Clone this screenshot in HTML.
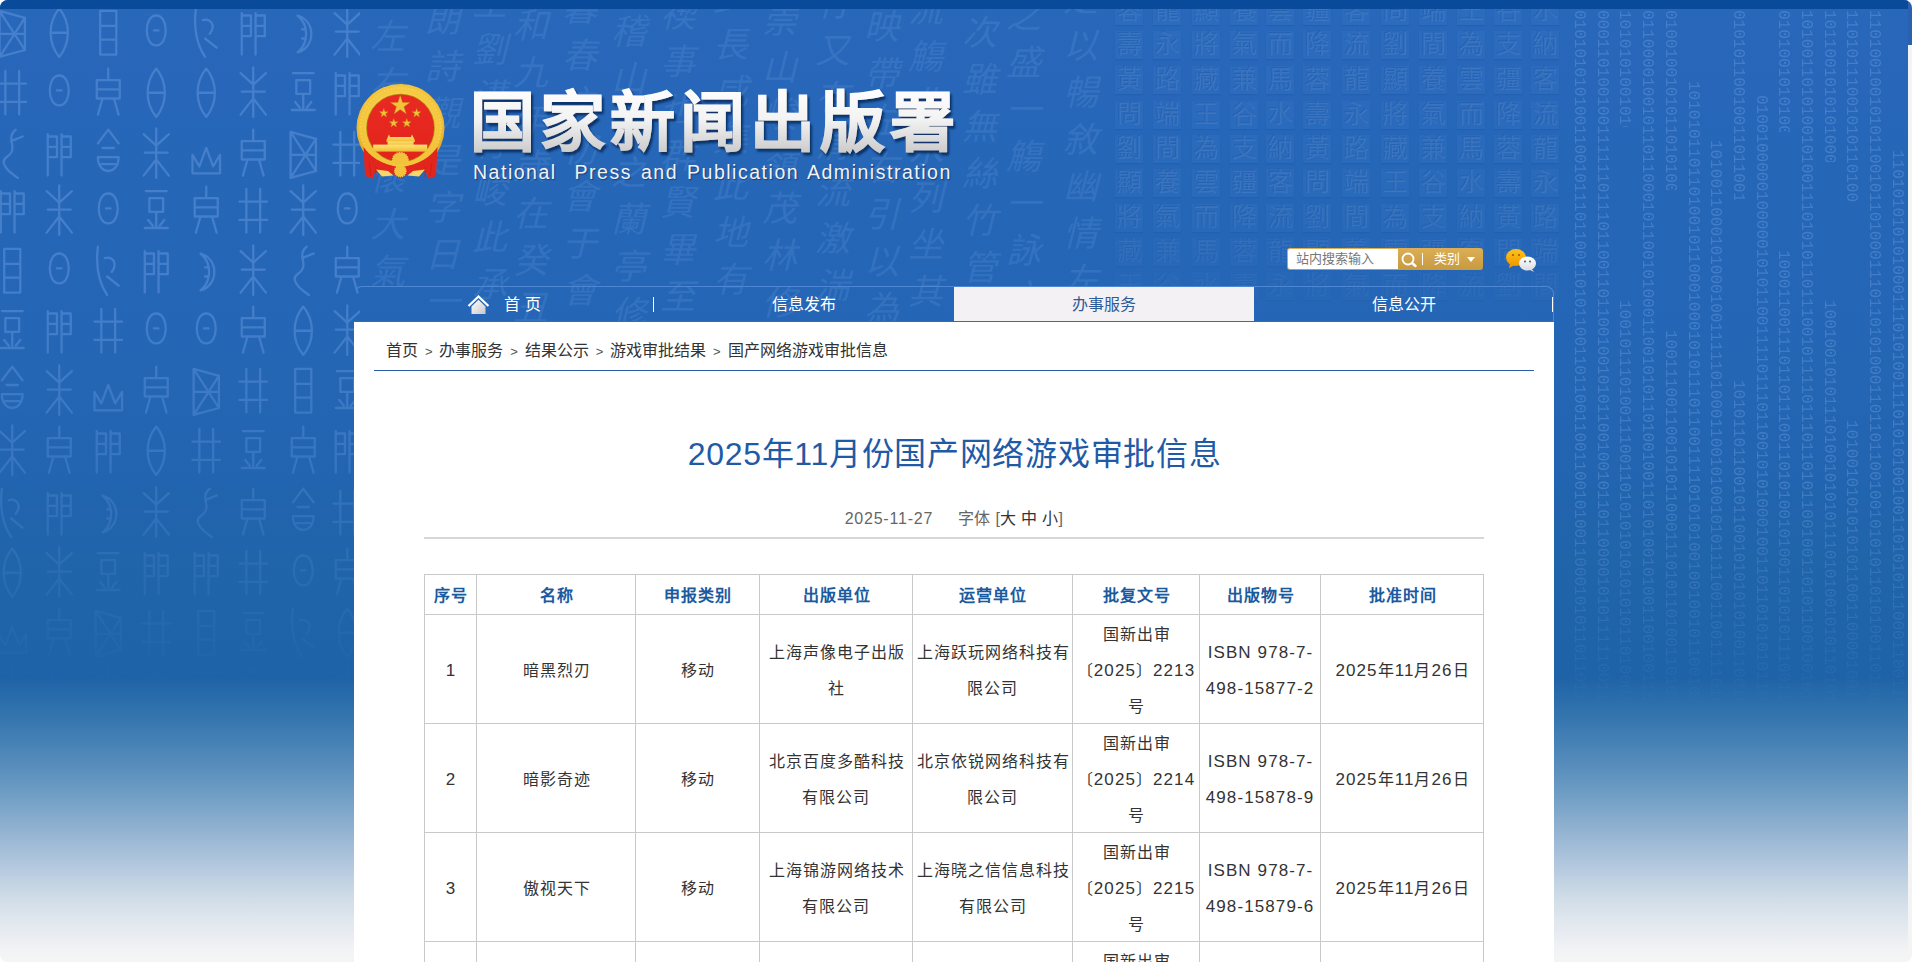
<!DOCTYPE html>
<html lang="zh-CN">
<head>
<meta charset="utf-8">
<title>国家新闻出版署</title>
<style>
html,body{margin:0;padding:0;}
body{width:1912px;height:962px;overflow:hidden;background:#fdfdfd;font-family:"Liberation Sans",sans-serif;position:relative;}
#frame{position:absolute;left:0;top:0;width:1912px;height:962px;border-radius:8px;overflow:hidden;}
#win{position:absolute;left:0;top:0;width:1908px;height:962px;overflow:hidden;
 background:linear-gradient(to bottom,#2867ba 0px,#2465b4 400px,#1f64a8 600px,#1e63a7 677px,#3878b0 723px,#5088b9 756px,#6b9bc3 790px,#8eb0cf 826px,#b4c9df 867px,#cfdce6 897px,#e2e8ef 924px,#f2f3f5 951px,#f5f5f5 962px);}
#sb{position:absolute;left:1908px;top:45px;width:4px;height:917px;background:#f4f4f4;}
#sbtop{position:absolute;left:1908px;top:0;width:4px;height:45px;background:#2a60ac;}
#topbar{position:absolute;left:0;top:0;width:100%;height:9px;background:#0a4a9b;}
/* header */
#emblem{position:absolute;left:355px;top:83px;width:92px;height:98px;}
#logo-cn{position:absolute;left:466px;top:80px;font-family:"Liberation Sans",sans-serif;}
#logo-en{position:absolute;left:473px;top:160px;font-size:19.5px;line-height:24px;color:#f2f2f2;letter-spacing:1.52px;white-space:nowrap;word-spacing:2px;
 text-shadow:1px 1px 1px rgba(10,40,90,0.6);}
/* search */
#search{position:absolute;left:1287px;top:248px;width:196px;height:22px;border-radius:3px;background:linear-gradient(#dcae55,#c89a40);box-sizing:border-box;}
#search .inp{position:absolute;left:1px;top:1px;width:110px;height:20px;background:#fff;border-radius:2px 0 0 2px;font-size:13px;line-height:20px;color:#777;text-indent:8px;}
#search .lb{position:absolute;left:147px;top:0;font-size:13px;line-height:22px;color:#fff;}
#search .sep{position:absolute;left:135px;top:5px;width:1px;height:12px;background:#fff;}
#search .tri{position:absolute;left:180px;top:9px;width:0;height:0;border-left:4px solid transparent;border-right:4px solid transparent;border-top:5px solid #fff;}
#wechat{position:absolute;left:1505px;top:248px;width:32px;height:25px;}
/* nav */
#nav{position:absolute;left:354px;top:286px;width:1200px;height:35px;box-sizing:border-box;border-top:1px solid #4d86d2;border-radius:8px 8px 0 0;border-left:1px solid transparent;border-right:1px solid #4d86d2;}
#nav .it{position:absolute;top:0;height:34px;line-height:36px;font-size:16px;color:#fff;text-align:center;}
#nav .sepv{position:absolute;top:10px;width:1px;height:15px;background:#fff;}
#nav .act{background:#f3f1f3;color:#2b5b9b;}
/* content */
#content{position:absolute;left:354px;top:321px;width:1200px;height:700px;background:#fff;border-top:1px solid #2a6ec4;box-sizing:border-box;}
#content>*{margin-top:-1px;}
#crumb{position:absolute;left:32px;top:18px;font-size:16px;line-height:24px;color:#333;white-space:nowrap;}
#crumb .gt{font-size:13px;color:#555;margin:0 6.9px;}
#crumbline{position:absolute;left:20px;top:49px;width:1160px;height:1px;background:#2a5ea6;}
#title{position:absolute;left:0;top:108px;width:1200px;text-align:center;font-size:32px;line-height:50px;letter-spacing:0.7px;text-indent:1px;color:#1f5aa6;white-space:nowrap;}
#meta{position:absolute;left:0;top:186px;width:1200px;text-align:center;font-size:16px;line-height:24px;color:#666;white-space:nowrap;}
#metaline{position:absolute;left:70px;top:216px;width:1060px;height:2px;background:#d7d7d7;}
table{position:absolute;left:70px;top:253px;border-collapse:collapse;font-size:16px;color:#333;}
td,th{border:1px solid #c9c9c9;text-align:center;padding:0;}
th{color:#1a5a9e;font-weight:bold;height:39px;letter-spacing:1px;text-indent:1px;line-height:39px;}
td{line-height:36px;height:108px;letter-spacing:1px;text-indent:1px;}
th div{position:relative;top:1px;}
td div{position:relative;top:2px;}
td .n{font-size:17px;letter-spacing:1.1px;}
</style>
</head>
<body>
<div id="frame">
<div id="win">
<!--TEX-->
<style>
#texM,#texS,#texB{position:absolute;left:0;top:0;width:1908px;height:962px;pointer-events:none;}
#texL{position:absolute;left:0;top:0;}
#texL{opacity:0.6;}
#texL{-webkit-mask-image:linear-gradient(to bottom,#000 0,#000 300px,rgba(0,0,0,0.6) 480px,rgba(0,0,0,0.25) 600px,transparent 690px);}
#texM span{position:absolute;font-family:"Liberation Serif",serif;font-size:35px;line-height:40px;color:rgba(130,180,240,0.18);font-style:italic;}
#texS span{position:absolute;width:28px;height:28px;font-family:"Liberation Serif",serif;font-size:25px;line-height:28px;text-align:center;color:rgba(160,200,250,0.13);text-shadow:-1px -1px 0 rgba(0,25,80,0.10);background:rgba(90,150,230,0.09);box-shadow:0 1px 1px rgba(0,25,80,0.08);}
#texS{-webkit-mask-image:linear-gradient(to bottom,#000 0,#000 200px,rgba(0,0,0,0.4) 290px);}
#texB div{position:absolute;height:16px;font-family:"Liberation Mono",monospace;font-size:16px;line-height:16px;letter-spacing:0px;color:rgba(150,195,250,0.26);transform-origin:0 0;transform:rotate(90deg) translate(0,-16px);white-space:nowrap;overflow:hidden;}
#texB{-webkit-mask-image:linear-gradient(to bottom,#000 0,#000 480px,rgba(0,0,0,0.5) 620px,transparent 720px);}
</style>
<svg id="texL" width="360" height="720" viewBox="0 0 360 720"><defs><path id="g0" d="M4,6 L26,12 L26,40 L4,46 Z M4,6 L26,40 M26,12 L4,46 M4,26 L26,26"/><path id="g1" d="M5,8 L5,44 M5,10 L13,10 L13,28 L5,28 M5,19 L13,19 M17,8 L17,44 M17,10 L25,10 L25,28 L17,28 M17,19 L25,19"/><path id="g2" d="M15,4 L6,16 M15,4 L24,16 M10,20 L20,20 M6,28 C6,44 24,44 24,28 Z M9,34 L21,34"/><path id="g3" d="M15,4 C5,16 5,34 15,46 C25,34 25,16 15,4 Z M8,25 L22,25"/><path id="g4" d="M10,10 C26,14 26,38 10,42 C20,34 20,18 10,10 Z M14,22 L16,22 M14,30 L16,30"/><path id="g5" d="M9,6 L9,44 M21,6 L21,44 M3,17 L27,17 M3,33 L27,33"/><path id="g6" d="M8,6 L22,6 L22,44 L8,44 Z M8,19 L22,19 M8,31 L22,31"/><path id="g7" d="M15,3 L15,46 M15,18 L4,8 M15,18 L26,8 M15,30 L4,44 M15,30 L26,44 M5,24 L25,24"/><path id="g8" d="M3,42 L3,26 L9,36 L15,20 L21,36 L27,26 L27,42 Z"/><path id="g9" d="M15,10 C4,10 4,36 15,36 C26,36 26,10 15,10 Z M13,23 L17,23"/><path id="g10" d="M18,4 C8,12 22,20 10,28 C4,32 10,40 20,46 M14,14 L24,10"/><path id="g11" d="M6,8 L24,8 M9,14 L21,14 L21,26 L9,26 Z M15,26 L15,40 M5,40 L25,40 M8,33 L12,38 M22,33 L18,38"/><path id="g12" d="M6,4 C4,20 6,34 14,46 M12,14 C18,12 24,18 18,26 M14,30 L24,38"/><path id="g13" d="M15,4 L15,14 M5,14 L25,14 L25,30 L5,30 Z M5,22 L25,22 M10,30 L6,44 M20,30 L24,44"/></defs><g fill="none" stroke="#5a90d8" stroke-width="2" stroke-linejoin="round" stroke-linecap="round"><use href="#g0" transform="translate(-5,4) scale(1.15,1.15)"/><use href="#g3" transform="translate(42,4) scale(1.15,1.15)"/><use href="#g6" transform="translate(91,4) scale(1.15,1.15)"/><use href="#g9" transform="translate(139,4) scale(1.15,1.15)"/><use href="#g12" transform="translate(189,4) scale(1.15,1.15)"/><use href="#g1" transform="translate(236,4) scale(1.15,1.15)"/><use href="#g4" transform="translate(286,4) scale(1.15,1.15)"/><use href="#g7" transform="translate(330,4) scale(1.15,1.15)"/><use href="#g5" transform="translate(-5,64) scale(1.15,1.15)"/><use href="#g9" transform="translate(42,64) scale(1.15,1.15)"/><use href="#g13" transform="translate(91,64) scale(1.15,1.15)"/><use href="#g3" transform="translate(139,64) scale(1.15,1.15)"/><use href="#g3" transform="translate(189,64) scale(1.15,1.15)"/><use href="#g7" transform="translate(236,64) scale(1.15,1.15)"/><use href="#g11" transform="translate(286,64) scale(1.15,1.15)"/><use href="#g1" transform="translate(330,64) scale(1.15,1.15)"/><use href="#g10" transform="translate(-5,125) scale(1.15,1.15)"/><use href="#g1" transform="translate(42,125) scale(1.15,1.15)"/><use href="#g2" transform="translate(91,125) scale(1.15,1.15)"/><use href="#g7" transform="translate(139,125) scale(1.15,1.15)"/><use href="#g8" transform="translate(189,125) scale(1.15,1.15)"/><use href="#g13" transform="translate(236,125) scale(1.15,1.15)"/><use href="#g0" transform="translate(286,125) scale(1.15,1.15)"/><use href="#g5" transform="translate(330,125) scale(1.15,1.15)"/><use href="#g1" transform="translate(-5,182) scale(1.15,1.15)"/><use href="#g7" transform="translate(42,182) scale(1.15,1.15)"/><use href="#g9" transform="translate(91,182) scale(1.15,1.15)"/><use href="#g11" transform="translate(139,182) scale(1.15,1.15)"/><use href="#g13" transform="translate(189,182) scale(1.15,1.15)"/><use href="#g5" transform="translate(236,182) scale(1.15,1.15)"/><use href="#g7" transform="translate(286,182) scale(1.15,1.15)"/><use href="#g9" transform="translate(330,182) scale(1.15,1.15)"/><use href="#g6" transform="translate(-5,242) scale(1.15,1.15)"/><use href="#g9" transform="translate(42,242) scale(1.15,1.15)"/><use href="#g12" transform="translate(91,242) scale(1.15,1.15)"/><use href="#g1" transform="translate(139,242) scale(1.15,1.15)"/><use href="#g4" transform="translate(189,242) scale(1.15,1.15)"/><use href="#g7" transform="translate(236,242) scale(1.15,1.15)"/><use href="#g10" transform="translate(286,242) scale(1.15,1.15)"/><use href="#g13" transform="translate(330,242) scale(1.15,1.15)"/><use href="#g11" transform="translate(-5,302) scale(1.15,1.15)"/><use href="#g1" transform="translate(42,302) scale(1.15,1.15)"/><use href="#g5" transform="translate(91,302) scale(1.15,1.15)"/><use href="#g9" transform="translate(139,302) scale(1.15,1.15)"/><use href="#g9" transform="translate(189,302) scale(1.15,1.15)"/><use href="#g13" transform="translate(236,302) scale(1.15,1.15)"/><use href="#g3" transform="translate(286,302) scale(1.15,1.15)"/><use href="#g7" transform="translate(330,302) scale(1.15,1.15)"/><use href="#g2" transform="translate(-5,362) scale(1.15,1.15)"/><use href="#g7" transform="translate(42,362) scale(1.15,1.15)"/><use href="#g8" transform="translate(91,362) scale(1.15,1.15)"/><use href="#g13" transform="translate(139,362) scale(1.15,1.15)"/><use href="#g0" transform="translate(189,362) scale(1.15,1.15)"/><use href="#g5" transform="translate(236,362) scale(1.15,1.15)"/><use href="#g6" transform="translate(286,362) scale(1.15,1.15)"/><use href="#g11" transform="translate(330,362) scale(1.15,1.15)"/><use href="#g7" transform="translate(-5,422) scale(1.15,1.15)"/><use href="#g13" transform="translate(42,422) scale(1.15,1.15)"/><use href="#g1" transform="translate(91,422) scale(1.15,1.15)"/><use href="#g3" transform="translate(139,422) scale(1.15,1.15)"/><use href="#g5" transform="translate(189,422) scale(1.15,1.15)"/><use href="#g11" transform="translate(236,422) scale(1.15,1.15)"/><use href="#g13" transform="translate(286,422) scale(1.15,1.15)"/><use href="#g1" transform="translate(330,422) scale(1.15,1.15)"/><use href="#g12" transform="translate(-5,484) scale(1.15,1.15)"/><use href="#g1" transform="translate(42,484) scale(1.15,1.15)"/><use href="#g4" transform="translate(91,484) scale(1.15,1.15)"/><use href="#g7" transform="translate(139,484) scale(1.15,1.15)"/><use href="#g10" transform="translate(189,484) scale(1.15,1.15)"/><use href="#g13" transform="translate(236,484) scale(1.15,1.15)"/><use href="#g2" transform="translate(286,484) scale(1.15,1.15)"/><use href="#g5" transform="translate(330,484) scale(1.15,1.15)"/><use href="#g3" transform="translate(-5,544) scale(1.15,1.15)"/><use href="#g7" transform="translate(42,544) scale(1.15,1.15)"/><use href="#g11" transform="translate(91,544) scale(1.15,1.15)"/><use href="#g1" transform="translate(139,544) scale(1.15,1.15)"/><use href="#g1" transform="translate(189,544) scale(1.15,1.15)"/><use href="#g5" transform="translate(236,544) scale(1.15,1.15)"/><use href="#g9" transform="translate(286,544) scale(1.15,1.15)"/><use href="#g13" transform="translate(330,544) scale(1.15,1.15)"/><use href="#g8" transform="translate(-5,604) scale(1.15,1.15)"/><use href="#g13" transform="translate(42,604) scale(1.15,1.15)"/><use href="#g0" transform="translate(91,604) scale(1.15,1.15)"/><use href="#g5" transform="translate(139,604) scale(1.15,1.15)"/><use href="#g6" transform="translate(189,604) scale(1.15,1.15)"/><use href="#g11" transform="translate(236,604) scale(1.15,1.15)"/><use href="#g12" transform="translate(286,604) scale(1.15,1.15)"/><use href="#g3" transform="translate(330,604) scale(1.15,1.15)"/><use href="#g13" transform="translate(-5,664) scale(1.15,1.15)"/><use href="#g5" transform="translate(42,664) scale(1.15,1.15)"/><use href="#g7" transform="translate(91,664) scale(1.15,1.15)"/><use href="#g9" transform="translate(139,664) scale(1.15,1.15)"/><use href="#g11" transform="translate(189,664) scale(1.15,1.15)"/><use href="#g3" transform="translate(236,664) scale(1.15,1.15)"/><use href="#g5" transform="translate(286,664) scale(1.15,1.15)"/><use href="#g7" transform="translate(330,664) scale(1.15,1.15)"/></g></svg>
<div id="texM"><span style="left:370px;top:18px">左</span><span style="left:370px;top:65px">右</span><span style="left:370px;top:112px">雜</span><span style="left:370px;top:159px">懷</span><span style="left:370px;top:206px">大</span><span style="left:370px;top:253px">氣</span><span style="left:425px;top:1px">朗</span><span style="left:425px;top:48px">詩</span><span style="left:425px;top:95px">觀</span><span style="left:425px;top:142px">是</span><span style="left:425px;top:189px">字</span><span style="left:425px;top:236px">日</span><span style="left:425px;top:283px">一</span><span style="left:472px;top:-16px">生</span><span style="left:472px;top:31px">劉</span><span style="left:472px;top:78px">溝</span><span style="left:472px;top:125px">有</span><span style="left:472px;top:172px">峻</span><span style="left:472px;top:219px">此</span><span style="left:472px;top:266px">承</span><span style="left:513px;top:7px">和</span><span style="left:513px;top:54px">九</span><span style="left:513px;top:101px">年</span><span style="left:513px;top:148px">歲</span><span style="left:513px;top:195px">在</span><span style="left:513px;top:242px">癸</span><span style="left:513px;top:289px">丑</span><span style="left:562px;top:-10px">暮</span><span style="left:562px;top:37px">春</span><span style="left:562px;top:84px">之</span><span style="left:562px;top:131px">初</span><span style="left:562px;top:178px">會</span><span style="left:562px;top:225px">于</span><span style="left:562px;top:272px">會</span><span style="left:611px;top:13px">稽</span><span style="left:611px;top:60px">山</span><span style="left:611px;top:107px">陰</span><span style="left:611px;top:154px">之</span><span style="left:611px;top:201px">蘭</span><span style="left:611px;top:248px">亭</span><span style="left:611px;top:295px">修</span><span style="left:660px;top:-4px">禊</span><span style="left:660px;top:43px">事</span><span style="left:660px;top:90px">也</span><span style="left:660px;top:137px">群</span><span style="left:660px;top:184px">賢</span><span style="left:660px;top:231px">畢</span><span style="left:660px;top:278px">至</span><span style="left:713px;top:-21px">少</span><span style="left:713px;top:26px">長</span><span style="left:713px;top:73px">咸</span><span style="left:713px;top:120px">集</span><span style="left:713px;top:167px">此</span><span style="left:713px;top:214px">地</span><span style="left:713px;top:261px">有</span><span style="left:762px;top:2px">崇</span><span style="left:762px;top:49px">山</span><span style="left:762px;top:96px">峻</span><span style="left:762px;top:143px">嶺</span><span style="left:762px;top:190px">茂</span><span style="left:762px;top:237px">林</span><span style="left:762px;top:284px">修</span><span style="left:815px;top:-15px">竹</span><span style="left:815px;top:32px">又</span><span style="left:815px;top:79px">有</span><span style="left:815px;top:126px">清</span><span style="left:815px;top:173px">流</span><span style="left:815px;top:220px">激</span><span style="left:815px;top:267px">湍</span><span style="left:864px;top:8px">映</span><span style="left:864px;top:55px">帶</span><span style="left:864px;top:102px">左</span><span style="left:864px;top:149px">右</span><span style="left:864px;top:196px">引</span><span style="left:864px;top:243px">以</span><span style="left:864px;top:290px">為</span><span style="left:908px;top:-9px">流</span><span style="left:908px;top:38px">觴</span><span style="left:908px;top:85px">曲</span><span style="left:908px;top:132px">水</span><span style="left:908px;top:179px">列</span><span style="left:908px;top:226px">坐</span><span style="left:908px;top:273px">其</span><span style="left:962px;top:14px">次</span><span style="left:962px;top:61px">雖</span><span style="left:962px;top:108px">無</span><span style="left:962px;top:155px">絲</span><span style="left:962px;top:202px">竹</span><span style="left:962px;top:249px">管</span><span style="left:962px;top:296px">弦</span><span style="left:1006px;top:-3px">之</span><span style="left:1006px;top:44px">盛</span><span style="left:1006px;top:91px">一</span><span style="left:1006px;top:138px">觴</span><span style="left:1006px;top:185px">一</span><span style="left:1006px;top:232px">詠</span><span style="left:1006px;top:279px">亦</span><span style="left:1063px;top:-20px">足</span><span style="left:1063px;top:27px">以</span><span style="left:1063px;top:74px">暢</span><span style="left:1063px;top:121px">敘</span><span style="left:1063px;top:168px">幽</span><span style="left:1063px;top:215px">情</span><span style="left:1063px;top:262px">左</span></div>
<div id="texS"><span style="left:1115px;top:-3px">蓉</span><span style="left:1153px;top:-3px">龍</span><span style="left:1192px;top:-3px">顯</span><span style="left:1230px;top:-3px">養</span><span style="left:1266px;top:-3px">雲</span><span style="left:1303px;top:-3px">疆</span><span style="left:1342px;top:-3px">客</span><span style="left:1381px;top:-3px">問</span><span style="left:1419px;top:-3px">端</span><span style="left:1457px;top:-3px">王</span><span style="left:1494px;top:-3px">谷</span><span style="left:1531px;top:-3px">水</span><span style="left:1115px;top:31px">壽</span><span style="left:1153px;top:31px">永</span><span style="left:1192px;top:31px">將</span><span style="left:1230px;top:31px">氣</span><span style="left:1266px;top:31px">而</span><span style="left:1303px;top:31px">降</span><span style="left:1342px;top:31px">流</span><span style="left:1381px;top:31px">劉</span><span style="left:1419px;top:31px">間</span><span style="left:1457px;top:31px">為</span><span style="left:1494px;top:31px">支</span><span style="left:1531px;top:31px">納</span><span style="left:1115px;top:66px">黃</span><span style="left:1153px;top:66px">路</span><span style="left:1192px;top:66px">藏</span><span style="left:1230px;top:66px">兼</span><span style="left:1266px;top:66px">馬</span><span style="left:1303px;top:66px">蓉</span><span style="left:1342px;top:66px">龍</span><span style="left:1381px;top:66px">顯</span><span style="left:1419px;top:66px">養</span><span style="left:1457px;top:66px">雲</span><span style="left:1494px;top:66px">疆</span><span style="left:1531px;top:66px">客</span><span style="left:1115px;top:101px">問</span><span style="left:1153px;top:101px">端</span><span style="left:1192px;top:101px">王</span><span style="left:1230px;top:101px">谷</span><span style="left:1266px;top:101px">水</span><span style="left:1303px;top:101px">壽</span><span style="left:1342px;top:101px">永</span><span style="left:1381px;top:101px">將</span><span style="left:1419px;top:101px">氣</span><span style="left:1457px;top:101px">而</span><span style="left:1494px;top:101px">降</span><span style="left:1531px;top:101px">流</span><span style="left:1115px;top:135px">劉</span><span style="left:1153px;top:135px">間</span><span style="left:1192px;top:135px">為</span><span style="left:1230px;top:135px">支</span><span style="left:1266px;top:135px">納</span><span style="left:1303px;top:135px">黃</span><span style="left:1342px;top:135px">路</span><span style="left:1381px;top:135px">藏</span><span style="left:1419px;top:135px">兼</span><span style="left:1457px;top:135px">馬</span><span style="left:1494px;top:135px">蓉</span><span style="left:1531px;top:135px">龍</span><span style="left:1115px;top:169px">顯</span><span style="left:1153px;top:169px">養</span><span style="left:1192px;top:169px">雲</span><span style="left:1230px;top:169px">疆</span><span style="left:1266px;top:169px">客</span><span style="left:1303px;top:169px">問</span><span style="left:1342px;top:169px">端</span><span style="left:1381px;top:169px">王</span><span style="left:1419px;top:169px">谷</span><span style="left:1457px;top:169px">水</span><span style="left:1494px;top:169px">壽</span><span style="left:1531px;top:169px">永</span><span style="left:1115px;top:204px">將</span><span style="left:1153px;top:204px">氣</span><span style="left:1192px;top:204px">而</span><span style="left:1230px;top:204px">降</span><span style="left:1266px;top:204px">流</span><span style="left:1303px;top:204px">劉</span><span style="left:1342px;top:204px">間</span><span style="left:1381px;top:204px">為</span><span style="left:1419px;top:204px">支</span><span style="left:1457px;top:204px">納</span><span style="left:1494px;top:204px">黃</span><span style="left:1531px;top:204px">路</span><span style="left:1115px;top:238px">藏</span><span style="left:1153px;top:238px">兼</span><span style="left:1192px;top:238px">馬</span><span style="left:1230px;top:238px">蓉</span><span style="left:1266px;top:238px">龍</span><span style="left:1303px;top:238px">顯</span><span style="left:1342px;top:238px">養</span><span style="left:1381px;top:238px">雲</span><span style="left:1419px;top:238px">疆</span><span style="left:1457px;top:238px">客</span><span style="left:1494px;top:238px">問</span><span style="left:1531px;top:238px">端</span><span style="left:1115px;top:272px">王</span><span style="left:1153px;top:272px">谷</span><span style="left:1192px;top:272px">水</span><span style="left:1230px;top:272px">壽</span><span style="left:1266px;top:272px">永</span><span style="left:1303px;top:272px">將</span><span style="left:1342px;top:272px">氣</span><span style="left:1381px;top:272px">而</span><span style="left:1419px;top:272px">降</span><span style="left:1457px;top:272px">流</span><span style="left:1494px;top:272px">劉</span><span style="left:1531px;top:272px">間</span></div>
<div id="texB"><div style="left:1571.0px;top:10px;width:690px">01010101010011001011101100110101100110110011001100101001100010101101101100101</div><div style="left:1593.7px;top:10px;width:690px">00011010010011111101110110011011001001010110010010110110000101011111001100100</div><div style="left:1616.4px;top:10px;width:117px">10101010010101</div><div style="left:1616.4px;top:300px;width:400px">100101110100111001101010101010101011010001011</div><div style="left:1639.1px;top:10px;width:690px">01100001001011011000101100101000110010101101001001101010010100110010011010101</div><div style="left:1661.8px;top:10px;width:180px">010010010101101010010</div><div style="left:1661.8px;top:330px;width:370px">100111001100101011000111010110100110101011</div><div style="left:1684.5px;top:81px;width:619px">101010110110100101100010001010111011001111010101001001001011001000011</div><div style="left:1707.2px;top:140px;width:560px">101001100010100010011111010001100101001010111100110011110101111</div><div style="left:1729.9px;top:10px;width:190px">0101011001001101100101</div><div style="left:1729.9px;top:380px;width:320px">101011011001011001010101010011001010</div><div style="left:1752.6px;top:95px;width:605px">01001000001000001010110011110111011001010100010011011010101011010101</div><div style="left:1775.3px;top:10px;width:122px">01010010101001</div><div style="left:1775.3px;top:250px;width:450px">100011001110110111001101010010100110101011100111010</div><div style="left:1798.0px;top:10px;width:690px">10100110101001010011101010110111001011110111011010110010011010110010010111001</div><div style="left:1820.7px;top:10px;width:152px">10110010101010001</div><div style="left:1820.7px;top:300px;width:400px">100100101011101001010101110101001010110101101</div><div style="left:1843.4px;top:10px;width:193px">1101011100101011010010</div><div style="left:1843.4px;top:420px;width:280px">10100101010101011001100001001000</div><div style="left:1866.1px;top:10px;width:690px">11010010010101100101101000111011010100011011011001001010101101010011010001010</div><div style="left:1888.8px;top:150px;width:550px">11010101010100011101010011101010100100110101011100011001101110</div></div>
<!--/TEX-->
 <div id="topbar"></div>
 <svg id="emblem" viewBox="0 0 92 98" width="92" height="98">
  <defs>
   <radialGradient id="gold" cx="50%" cy="45%" r="55%"><stop offset="0.6" stop-color="#f7cf4a"/><stop offset="0.85" stop-color="#f3c238"/><stop offset="1" stop-color="#d8a020"/></radialGradient>
   <linearGradient id="red" x1="0" y1="0" x2="0" y2="1"><stop offset="0" stop-color="#ea2a22"/><stop offset="1" stop-color="#e0241c"/></linearGradient>
   <linearGradient id="gd2" x1="0" y1="0" x2="0" y2="1"><stop offset="0" stop-color="#ffe27a"/><stop offset="1" stop-color="#f0bb2e"/></linearGradient>
  </defs>
  <circle cx="45.5" cy="45" r="44" fill="url(#gold)"/>
  <circle cx="45.5" cy="45" r="40" fill="none" stroke="#f9d860" stroke-width="2" stroke-dasharray="1.5 2" opacity="0.6"/>
  <circle cx="45.5" cy="45" r="34.3" fill="#b8860e"/>
  <circle cx="45.5" cy="45" r="33.5" fill="url(#red)"/>
  <g fill="#f1c23a" stroke="#c8901a" stroke-width="0.4">
   <polygon points="45.2,12.5 47.5,19.5 54.8,19.5 48.9,23.8 51.2,30.8 45.2,26.5 39.2,30.8 41.5,23.8 35.6,19.5 42.9,19.5"/>
   <polygon points="28.8,25.5 29.9,28.7 33.2,28.7 30.6,30.7 31.6,33.9 28.8,32 26,33.9 27,30.7 24.4,28.7 27.7,28.7"/>
   <polygon points="61.6,25.5 62.7,28.7 66,28.7 63.4,30.7 64.4,33.9 61.6,32 58.8,33.9 59.8,30.7 57.2,28.7 60.5,28.7"/>
   <polygon points="38.7,35.5 39.8,38.7 43.1,38.7 40.5,40.7 41.5,43.9 38.7,42 35.9,43.9 36.9,40.7 34.3,38.7 37.6,38.7"/>
   <polygon points="51.8,35.5 52.9,38.7 56.2,38.7 53.6,40.7 54.6,43.9 51.8,42 49,43.9 50,40.7 47.4,38.7 50.7,38.7"/>
  </g>
  <g fill="url(#gd2)">
   <polygon points="31.5,57 34,51.5 35,54 56,54 57,51.5 59.8,57 60,59 31.5,59"/>
   <rect x="32.6" y="58.5" width="26" height="3.5"/>
   <rect x="18.2" y="61.6" width="54" height="7"/>
  </g>
  <circle cx="45.3" cy="77.5" r="8" fill="#f1c23a" stroke="#f6d050" stroke-width="1.4" stroke-dasharray="1.2 1.2"/>
  <path d="M8.5,64 C14,72 26,82.5 45.5,84 C65,82.5 77,72 82.5,64 L81,93 L73.5,95.8 L70.5,88 C62,90 54,89 45.5,95.5 C37,89 29,90 20.5,88 L17.5,95.8 L10,93 Z" fill="#e2261d"/>
  <path d="M10,62.5 C15.5,70.5 27,81 45.5,82.3 C64,81 75.5,70.5 81,62.5" fill="none" stroke="#f3c53c" stroke-width="2.6"/>
  <path d="M14,80 L16,93 M21,84 L21,94 M70,84 L70,94 M77,80 L75,93" stroke="#c01810" stroke-width="0.8" fill="none" opacity="0.7"/>
  <polygon points="21,86.5 33,88 38.5,92.5 27,93.5" fill="#f7d66a"/>
  <polygon points="70,86.5 58,88 52.5,92.5 64,93.5" fill="#f7d66a"/>
  <circle cx="45.3" cy="88" r="5.8" fill="#f1c23a" stroke="#f6d050" stroke-width="1.2" stroke-dasharray="1 1"/>
 </svg>
 <svg id="logo-cn" width="520" height="90" viewBox="0 0 520 90"><defs><linearGradient id="tg" x1="0" y1="0" x2="0" y2="1"><stop offset="0" stop-color="#ffffff"/><stop offset="0.45" stop-color="#f3f3f3"/><stop offset="1" stop-color="#c4c4c4"/></linearGradient>
  <filter id="tsh" x="-5%" y="-10%" width="115%" height="130%"><feGaussianBlur in="SourceAlpha" stdDeviation="1.2"/><feOffset dx="2" dy="2.5" result="b"/><feFlood flood-color="#082858" flood-opacity="0.85"/><feComposite in2="b" operator="in"/><feMerge><feMergeNode/><feMergeNode in="SourceGraphic"/></feMerge></filter></defs>
  <text x="4" y="65" font-size="65" font-weight="bold" letter-spacing="5" fill="url(#tg)" stroke="url(#tg)" stroke-width="1.1" stroke-linejoin="miter" filter="url(#tsh)">国家新闻出版署</text></svg>
 <div id="logo-en">National&nbsp; Press and Publication Administration</div>
 <div id="search"><div class="inp">站内搜索输入</div>
  <svg style="position:absolute;left:113px;top:3px" width="20" height="17" viewBox="0 0 20 17"><circle cx="8" cy="8" r="5.5" fill="none" stroke="#fff" stroke-width="1.8"/><line x1="12" y1="12" x2="15.5" y2="15" stroke="#fff" stroke-width="2.4" stroke-linecap="round"/></svg>
  <div class="sep"></div><div class="lb">类别</div><div class="tri"></div></div>
 <svg id="wechat" viewBox="0 0 32 25" width="32" height="25">
  <defs><linearGradient id="wy" x1="0" y1="0" x2="0" y2="1"><stop offset="0" stop-color="#ffc21a"/><stop offset="1" stop-color="#f09a00"/></linearGradient>
  <linearGradient id="ww" x1="0" y1="0" x2="0" y2="1"><stop offset="0" stop-color="#ffffff"/><stop offset="1" stop-color="#d9dde3"/></linearGradient></defs>
  <ellipse cx="11" cy="9.5" rx="10" ry="8.5" fill="url(#wy)"/>
  <polygon points="5,15 4,20 10,17" fill="#f09a00"/>
  <circle cx="8" cy="7" r="1" fill="#8a5a00"/><circle cx="14" cy="7" r="1" fill="#8a5a00"/>
  <ellipse cx="22.5" cy="15.5" rx="8.5" ry="7" fill="url(#ww)"/>
  <polygon points="26,20 29,24 23,21" fill="#dde0e5"/>
  <circle cx="20" cy="13.5" r="1" fill="#555"/><circle cx="25" cy="13.5" r="1" fill="#555"/>
 </svg>
 <div id="nav">
  <svg style="position:absolute;left:112px;top:8px" width="24" height="20" viewBox="0 0 24 20"><defs><linearGradient id="hg" x1="0" y1="0" x2="1" y2="1"><stop offset="0" stop-color="#fff"/><stop offset="1" stop-color="#c8c8cc"/></linearGradient></defs>
   <polyline points="1.5,11 11.5,1.5 21.5,11" fill="none" stroke="#fff" stroke-width="2.2"/>
   <polygon points="4.5,11.5 11.5,4.8 18.5,11.5 18.5,19 4.5,19" fill="url(#hg)"/></svg>
  <div class="it" style="left:149px;width:60px;text-align:left;letter-spacing:5px">首页</div>
  <div class="sepv" style="left:298px"></div>
  <div class="it" style="left:299px;width:300px">信息发布</div>
  <div class="it act" style="left:599px;width:300px">办事服务</div>
  <div class="it" style="left:899px;width:300px">信息公开</div>
  <div class="sepv" style="left:1197px;"></div>
 </div>
 <div id="content">
  <div id="crumb">首页<span class="gt">&gt;</span>办事服务<span class="gt">&gt;</span>结果公示<span class="gt">&gt;</span>游戏审批结果<span class="gt">&gt;</span>国产网络游戏审批信息</div>
  <div id="crumbline"></div>
  <div id="title">2025年11月份国产网络游戏审批信息</div>
  <div id="meta"><span style="letter-spacing:0.78px">2025-11-27</span><span style="display:inline-block;width:25px"></span><span style="letter-spacing:0.3px">字体 [<span style="color:#333">大 中 小</span>]</span></div>
  <div id="metaline"></div>
  <table>
   <tr><th style="width:51px"><div>序号</div></th><th style="width:158px"><div>名称</div></th><th style="width:123px"><div>申报类别</div></th><th style="width:152px"><div>出版单位</div></th><th style="width:159px"><div>运营单位</div></th><th style="width:126px"><div>批复文号</div></th><th style="width:120px"><div>出版物号</div></th><th style="width:162px"><div>批准时间</div></th></tr>
   <tr><td><div><span class="n">1</span></div></td><td><div>暗黑烈刃</div></td><td><div>移动</div></td><td><div>上海声像电子出版<br>社</div></td><td><div>上海跃玩网络科技有<br>限公司</div></td><td><div>国新出审<br>〔<span class="n">2025</span>〕<span class="n">2213</span><br>号</div></td><td><div><span class="n">ISBN 978-7-</span><br><span class="n">498-15877-2</span></div></td><td><div><span class="n">2025</span>年<span class="n">11</span>月<span class="n">26</span>日</div></td></tr>
   <tr><td><div><span class="n">2</span></div></td><td><div>暗影奇迹</div></td><td><div>移动</div></td><td><div>北京百度多酷科技<br>有限公司</div></td><td><div>北京依锐网络科技有<br>限公司</div></td><td><div>国新出审<br>〔<span class="n">2025</span>〕<span class="n">2214</span><br>号</div></td><td><div><span class="n">ISBN 978-7-</span><br><span class="n">498-15878-9</span></div></td><td><div><span class="n">2025</span>年<span class="n">11</span>月<span class="n">26</span>日</div></td></tr>
   <tr><td><div><span class="n">3</span></div></td><td><div>傲视天下</div></td><td><div>移动</div></td><td><div>上海锦游网络技术<br>有限公司</div></td><td><div>上海晓之信信息科技<br>有限公司</div></td><td><div>国新出审<br>〔<span class="n">2025</span>〕<span class="n">2215</span><br>号</div></td><td><div><span class="n">ISBN 978-7-</span><br><span class="n">498-15879-6</span></div></td><td><div><span class="n">2025</span>年<span class="n">11</span>月<span class="n">26</span>日</div></td></tr>
   <tr><td><div><span class="n">4</span></div></td><td><div></div></td><td><div></div></td><td><div></div></td><td><div></div></td><td><div>国新出审<br>〔<span class="n">2025</span>〕<span class="n">2216</span><br>号</div></td><td><div></div></td><td><div></div></td></tr>
  </table>
 </div>
</div>
<div id="sbtop"></div>
<div id="sb"></div>
</div>
</body>
</html>
